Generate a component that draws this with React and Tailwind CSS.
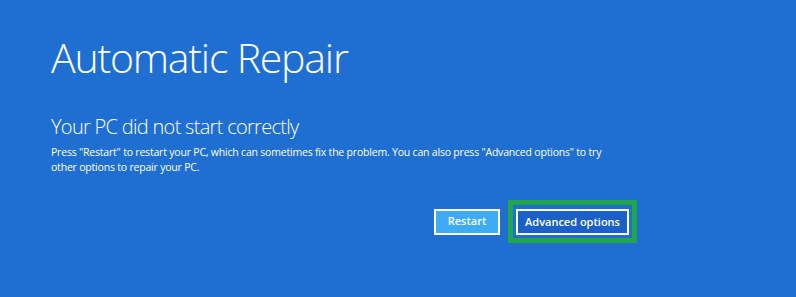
import React from "react";

export default function App() {
  return (
    <div
      className="w-[796px] h-[297px] bg-[#1f6fd3] text-white overflow-hidden"
      style={{ fontFamily: '"Open Sans", "Noto Sans", sans-serif' }}
    >
      <div className="pl-[51px] pt-[31px]">
        <h1 className="text-[41px] font-light leading-[52px] tracking-[-1.2px]">
          Automatic Repair
        </h1>
        <h2 className="mt-[31px] text-[20px] font-light leading-[26px] tracking-[-0.7px]">
          Your PC did not start correctly
        </h2>
        <p className="w-[560px] text-[10.5px] leading-[15px] mt-[5px] tracking-[-0.2px]">
          Press "Restart" to restart your PC, which can sometimes fix the problem. You can also press
          "Advanced options" to try other options to repair your PC.
        </p>
        <div className="flex items-center pl-[383px] mt-[25px]">
          <button className="w-[66px] h-[26px] bg-[#3eacf4] border-2 border-white text-[11px] font-semibold">
            Restart
          </button>
          <div className="ml-[8px] border-[5px] border-[#22a64b] p-[3px] px-[3px]">
            <button className="w-[113px] h-[26px] bg-[#1b5fc9] border-2 border-white text-[11px] font-semibold">
              Advanced options
            </button>
          </div>
        </div>
      </div>
    </div>
  );
}
